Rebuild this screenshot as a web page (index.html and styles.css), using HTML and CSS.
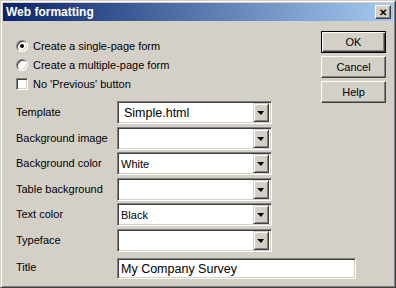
FILE: index.html
```html
<!DOCTYPE html>
<html>
<head>
	<meta name="viewport" content="width=device-width, initial-scale=1">
	<title>Web formatting</title>
	<link rel="stylesheet" href="styles.css">
</head>
<body>
	<div class="window">
		<div class="titlebar">
			<span class="title">Web formatting</span>
			<span class="close">&#x2715;</span>
		</div>
		<div class="content">
			<div class="main">
				<div class="choice"><span class="radio checked"></span>Create a single-page form</div>
				<div class="choice"><span class="radio"></span>Create a multiple-page form</div>
				<div class="choice"><span class="check"></span>No 'Previous' button</div>

				<div class="fields">
					<div class="label">Template</div>
					<div class="combo"><span class="value big">Simple.html</span><span class="drop"></span></div>
					<div class="label">Background image</div>
					<div class="combo"><span class="value"></span><span class="drop"></span></div>
					<div class="label">Background color</div>
					<div class="combo"><span class="value">White</span><span class="drop"></span></div>
					<div class="label">Table background</div>
					<div class="combo"><span class="value"></span><span class="drop"></span></div>
					<div class="label">Text color</div>
					<div class="combo"><span class="value">Black</span><span class="drop"></span></div>
					<div class="label">Typeface</div>
					<div class="combo"><span class="value"></span><span class="drop"></span></div>
					<div class="label title-label">Title</div>
					<div class="textbox">My Company Survey</div>
				</div>
			</div>
			<div class="actions">
				<button class="btn default">OK</button>
				<button class="btn">Cancel</button>
				<button class="btn">Help</button>
			</div>
		</div>
	</div>
</body>
</html>
```

FILE: styles.css
```css
html, body {
	margin: 0;
	padding: 0;
	background-color: #d4d0c8;
}
body {
	font-family: "Liberation Sans", Arial, sans-serif;
	font-size: 11px;
	color: #000;
}
.window {
	width: 396px;
	height: 288px;
	box-sizing: border-box;
	border: 1px solid;
	border-color: #d4d0c8 #404040 #404040 #d4d0c8;
	box-shadow: inset 1px 1px #fff, inset -1px -1px #808080;
	padding: 2px;
	background-color: #d4d0c8;
}
.titlebar {
	height: 18px;
	display: flex;
	align-items: center;
	justify-content: space-between;
	padding: 0 2px 0 3px;
	background: linear-gradient(to right, #0a246a, #a6caf0);
}
.title {
	color: #fff;
	font-weight: bold;
	font-size: 12px;
}
.close {
	width: 16px;
	height: 14px;
	box-sizing: border-box;
	display: flex;
	align-items: center;
	justify-content: center;
	font-size: 10px;
	font-weight: bold;
	background-color: #d4d0c8;
	border: 1px solid;
	border-color: #fff #404040 #404040 #fff;
	box-shadow: inset -1px -1px #808080;
}
.content {
	display: flex;
}
.main {
	flex: none;
	width: 318px;
	box-sizing: border-box;
	padding: 19px 0 0 13px;
}
.choice {
	display: flex;
	align-items: center;
	height: 12px;
	line-height: 12px;
	margin-bottom: 7px;
}
.radio, .check {
	width: 12px;
	height: 12px;
	box-sizing: border-box;
	margin-right: 5px;
	background-color: #fff;
	border: 1px solid;
	border-color: #808080 #fff #fff #808080;
	box-shadow: inset 1px 1px #404040, inset -1px -1px #d4d0c8;
	position: relative;
}
.radio {
	border-radius: 50%;
}
.radio.checked::after {
	content: "";
	position: absolute;
	left: 3px;
	top: 3px;
	width: 4px;
	height: 4px;
	border-radius: 50%;
	background-color: #000;
}
.fields {
	display: grid;
	grid-template-columns: 101px 155px;
	row-gap: 2.5px;
	margin-top: 11px;
}
.label {
	padding-top: 5px;
	line-height: 13px;
	white-space: nowrap;
}
.combo, .textbox {
	height: 23px;
	box-sizing: border-box;
	background-color: #fff;
	border: 1px solid;
	border-color: #808080 #fff #fff #808080;
	box-shadow: inset 1px 1px #404040, inset -1px -1px #d4d0c8;
	display: flex;
	align-items: center;
}
.combo {
	width: 155px;
	padding: 2px;
}
.value {
	flex: 1;
	padding-left: 1px;
}
.value.big {
	font-size: 12.5px;
	padding-left: 4px;
}
.drop {
	width: 16px;
	height: 19px;
	box-sizing: border-box;
	background-color: #d4d0c8;
	border: 1px solid;
	border-color: #d4d0c8 #404040 #404040 #d4d0c8;
	box-shadow: inset 1px 1px #fff, inset -1px -1px #808080;
	position: relative;
}
.drop::after {
	content: "";
	position: absolute;
	left: 3px;
	top: 7px;
	border-left: 4px solid transparent;
	border-right: 3px solid transparent;
	border-top: 4px solid #000;
}
.title-label {
	margin-top: 4px;
	padding-top: 3px;
}
.textbox {
	width: 239px;
	height: 21px;
	margin-top: 4px;
	padding-left: 3px;
	font-size: 12.5px;
	white-space: nowrap;
}
.actions {
	flex: none;
	padding-top: 10px;
	display: flex;
	flex-direction: column;
	gap: 3px;
}
.btn {
	width: 65px;
	height: 22px;
	box-sizing: border-box;
	font-family: "Liberation Sans", Arial, sans-serif;
	font-size: 11px;
	color: #000;
	background-color: #d4d0c8;
	border: 1px solid;
	border-color: #fff #404040 #404040 #fff;
	box-shadow: inset -1px -1px #808080;
	padding: 0;
}
.btn.default {
	border: 1px solid #000;
	box-shadow: inset 1px 1px #fff, inset -1px -1px #404040, inset -2px -2px #808080;
}
```
